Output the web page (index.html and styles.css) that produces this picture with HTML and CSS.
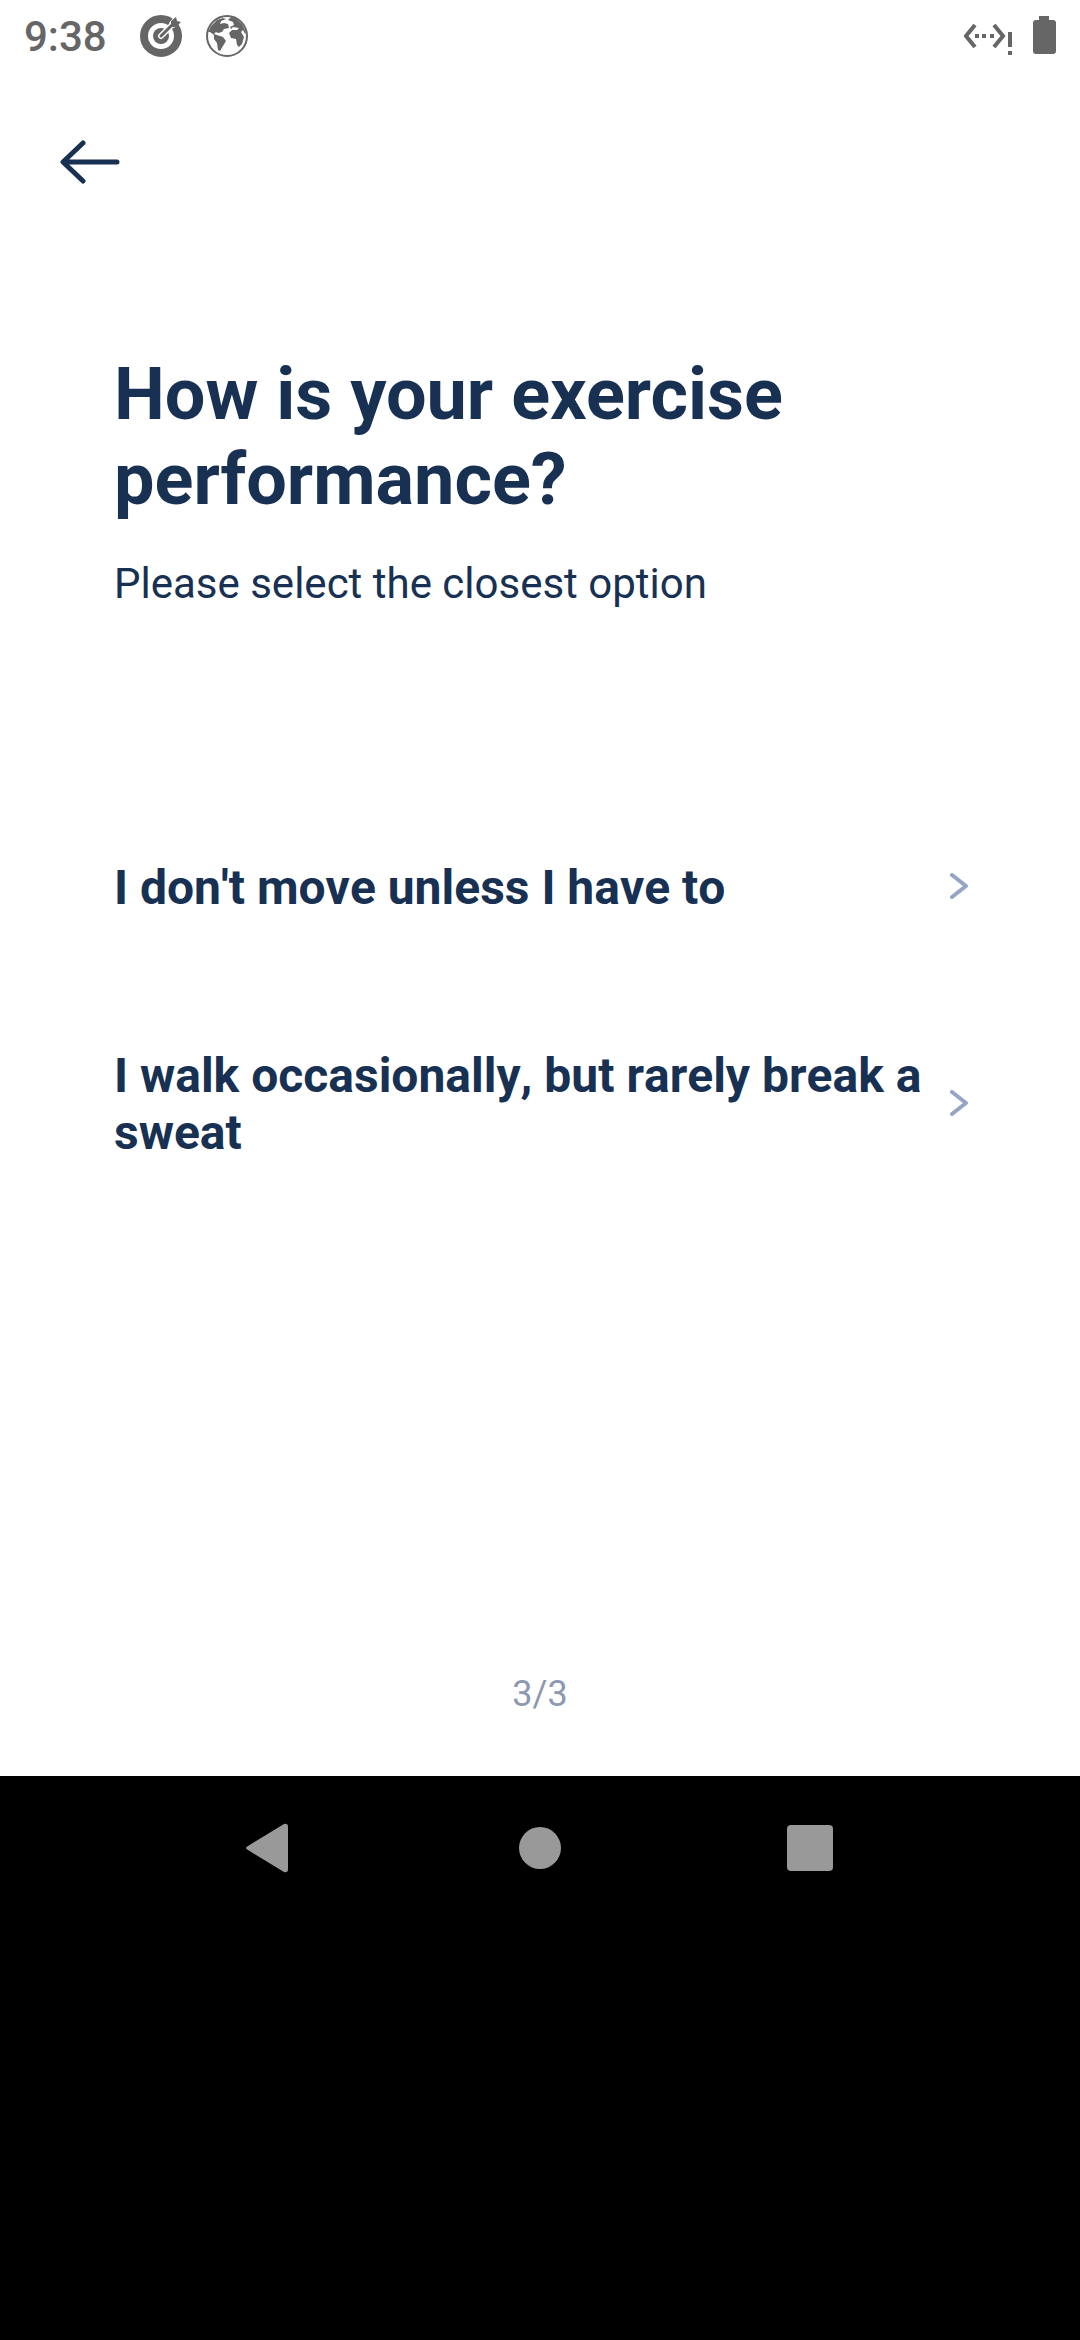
FILE: index.html
```html
<!DOCTYPE html>
<html lang="en">
<head>
<meta charset="utf-8">
<meta name="viewport" content="width=device-width, initial-scale=1">
<title>Exercise performance</title>
<link rel="stylesheet" href="styles.css">
</head>
<body>
<header class="status">
  <span class="clock">9:38</span>
  <svg class="status-icon" viewBox="0 0 42 42" aria-hidden="true">
    <circle cx="21" cy="21" r="17" fill="none" stroke="#666" stroke-width="8"/>
    <circle cx="21" cy="21" r="8" fill="#666"/>
    <path d="M21 21 36 6" stroke="#fff" stroke-width="6" stroke-linecap="round"/>
    <path d="M29 8 36 -1 43 5 34 13z" fill="#fff"/>
    <path d="M21 21 34 8" stroke="#666" stroke-width="3" stroke-linecap="round"/>
    <path d="M31 11v-5l5-4 1 4 4 1-5 5h-5z" fill="#666"/>
  </svg>
  <svg class="status-icon" viewBox="0 0 42 42" aria-hidden="true">
    <circle cx="21" cy="21" r="20" fill="none" stroke="#666" stroke-width="2"/>
    <path fill="#666" d="M2 17 5 11 11 5 17 3 20 4 15 6 14 9 18 8 22 9 23 13 18 14 16 17 12 18 10 17 8 19 11 20 17 22 20 26 17 31 14 36 12 35 11 28 8 24 8 20 4 17zM25 2 30 4 36 9 40 17 39 19 37 15 35 17 38 22 36 29 33 32 31 30 30 24 25 23 23 18 26 15 31 15 33 13 27 12 25 14 24 12 28 10 27 7 22 5z"/>
  </svg>
  <div class="indicators">
    <svg class="network" viewBox="0 0 48 40" aria-hidden="true">
      <path d="M11 9 2 20 11 31M30 9 39 20 30 31" fill="none" stroke="#666" stroke-width="4"/>
      <path d="M11 18h4v4h-4zM18 18h4v4h-4zM26 18h4v4h-4zM44 16h4v15h-4zM44 35h4v4h-4z" fill="#666"/>
    </svg>
    <svg class="battery" viewBox="0 0 24 40" aria-hidden="true">
      <path d="M7 0h10v4h4q3 0 3 3v28q0 3-3 3H4q-3 0-3-3V7q0-3 3-3h3z" fill="#666"/>
    </svg>
  </div>
</header>
<main class="screen">
  <button class="back" type="button" aria-label="Back">
    <svg class="arrow" viewBox="0 0 60 46" aria-hidden="true">
      <path d="M23 4 3 23 23 42M4 23H57" fill="none" stroke="#183153" stroke-width="5" stroke-linecap="round" stroke-linejoin="round"/>
    </svg>
  </button>
  <section class="question">
    <h1 class="title">How is your exercise performance?</h1>
    <p class="hint">Please select the closest option</p>
    <div class="options">
      <button class="option" type="button">
        <span class="label">I don't move unless I have to</span>
        <svg class="chevron" viewBox="0 0 18 26" aria-hidden="true"><path d="M2 2 16 13 2 24" /></svg>
      </button>
      <button class="option" type="button">
        <span class="label">I walk occasionally, but rarely break a sweat</span>
        <svg class="chevron" viewBox="0 0 18 26" aria-hidden="true"><path d="M2 2 16 13 2 24" /></svg>
      </button>
    </div>
  </section>
  <p class="progress">3/3</p>
</main>
<nav class="system">
  <button class="key" type="button" aria-label="Back">
    <svg class="key-icon" viewBox="0 0 54 54" aria-hidden="true"><path d="M5 25 41 3q4-1 4 3v42q0 4-4 3L5 29q-4-2 0-4z"/></svg>
  </button>
  <button class="key" type="button" aria-label="Home">
    <svg class="key-icon" viewBox="0 0 54 54" aria-hidden="true"><circle cx="27" cy="27" r="21"/></svg>
  </button>
  <button class="key" type="button" aria-label="Recent apps">
    <svg class="key-icon" viewBox="0 0 54 54" aria-hidden="true"><rect x="4" y="4" width="46" height="46" rx="4"/></svg>
  </button>
</nav>
</body>
</html>
```

FILE: styles.css
```css
* {
  box-sizing: border-box;
}

body {
  margin: 0;
  min-height: 100vh;
  display: flex;
  flex-direction: column;
  background: #000;
  color: #183153;
  font-family: Roboto, "Liberation Sans", sans-serif;
}

button {
  padding: 0;
  border: 0;
  background: none;
  color: inherit;
  font: inherit;
  text-align: left;
  cursor: pointer;
}

svg {
  display: block;
  flex: none;
}

.status {
  display: flex;
  align-items: center;
  gap: 24px;
  height: 72px;
  padding: 0 24px;
  background: #fff;
}

.clock {
  margin-right: 9px;
  color: #666;
  font-size: 42px;
  font-weight: 500;
}

.status-icon {
  width: 42px;
  height: 42px;
}

.indicators {
  display: flex;
  gap: 20px;
  margin-left: auto;
}

.network {
  width: 48px;
  height: 40px;
}

.battery {
  width: 24px;
  height: 40px;
}

.screen {
  display: flex;
  flex-direction: column;
  min-height: 1704px;
  background: #fff;
}

.back {
  align-self: flex-start;
  padding: 67px 60px;
}

.arrow {
  width: 60px;
  height: 46px;
}

.question {
  padding: 100px 112px 0 114px;
}

.title {
  margin: 0;
  font-size: 72px;
  font-weight: 700;
  line-height: 85px;
}

.hint {
  margin: 37px 0 0;
  font-size: 42px;
  line-height: 50px;
}

.options {
  display: grid;
  gap: 131px;
  margin-top: 250px;
}

.option {
  display: flex;
  align-items: center;
  gap: 24px;
  width: 100%;
  font-size: 48px;
  font-weight: 700;
  font-kerning: none;
  line-height: 57px;
}

.label {
  flex: 1;
}

.chevron {
  width: 18px;
  height: 26px;
  margin-bottom: 3px;
  fill: none;
  stroke: #94a6c4;
  stroke-width: 4;
  stroke-linecap: round;
  stroke-linejoin: round;
}

.progress {
  margin: auto 0 60px;
  color: #8b99b2;
  font-size: 36px;
  line-height: 44px;
  text-align: center;
}

.system {
  display: grid;
  grid-template-columns: repeat(3, 270px);
  justify-content: center;
  background: #000;
}

.key {
  display: grid;
  place-items: center;
  height: 144px;
}

.key-icon {
  width: 54px;
  height: 54px;
  fill: #999;
}
```
